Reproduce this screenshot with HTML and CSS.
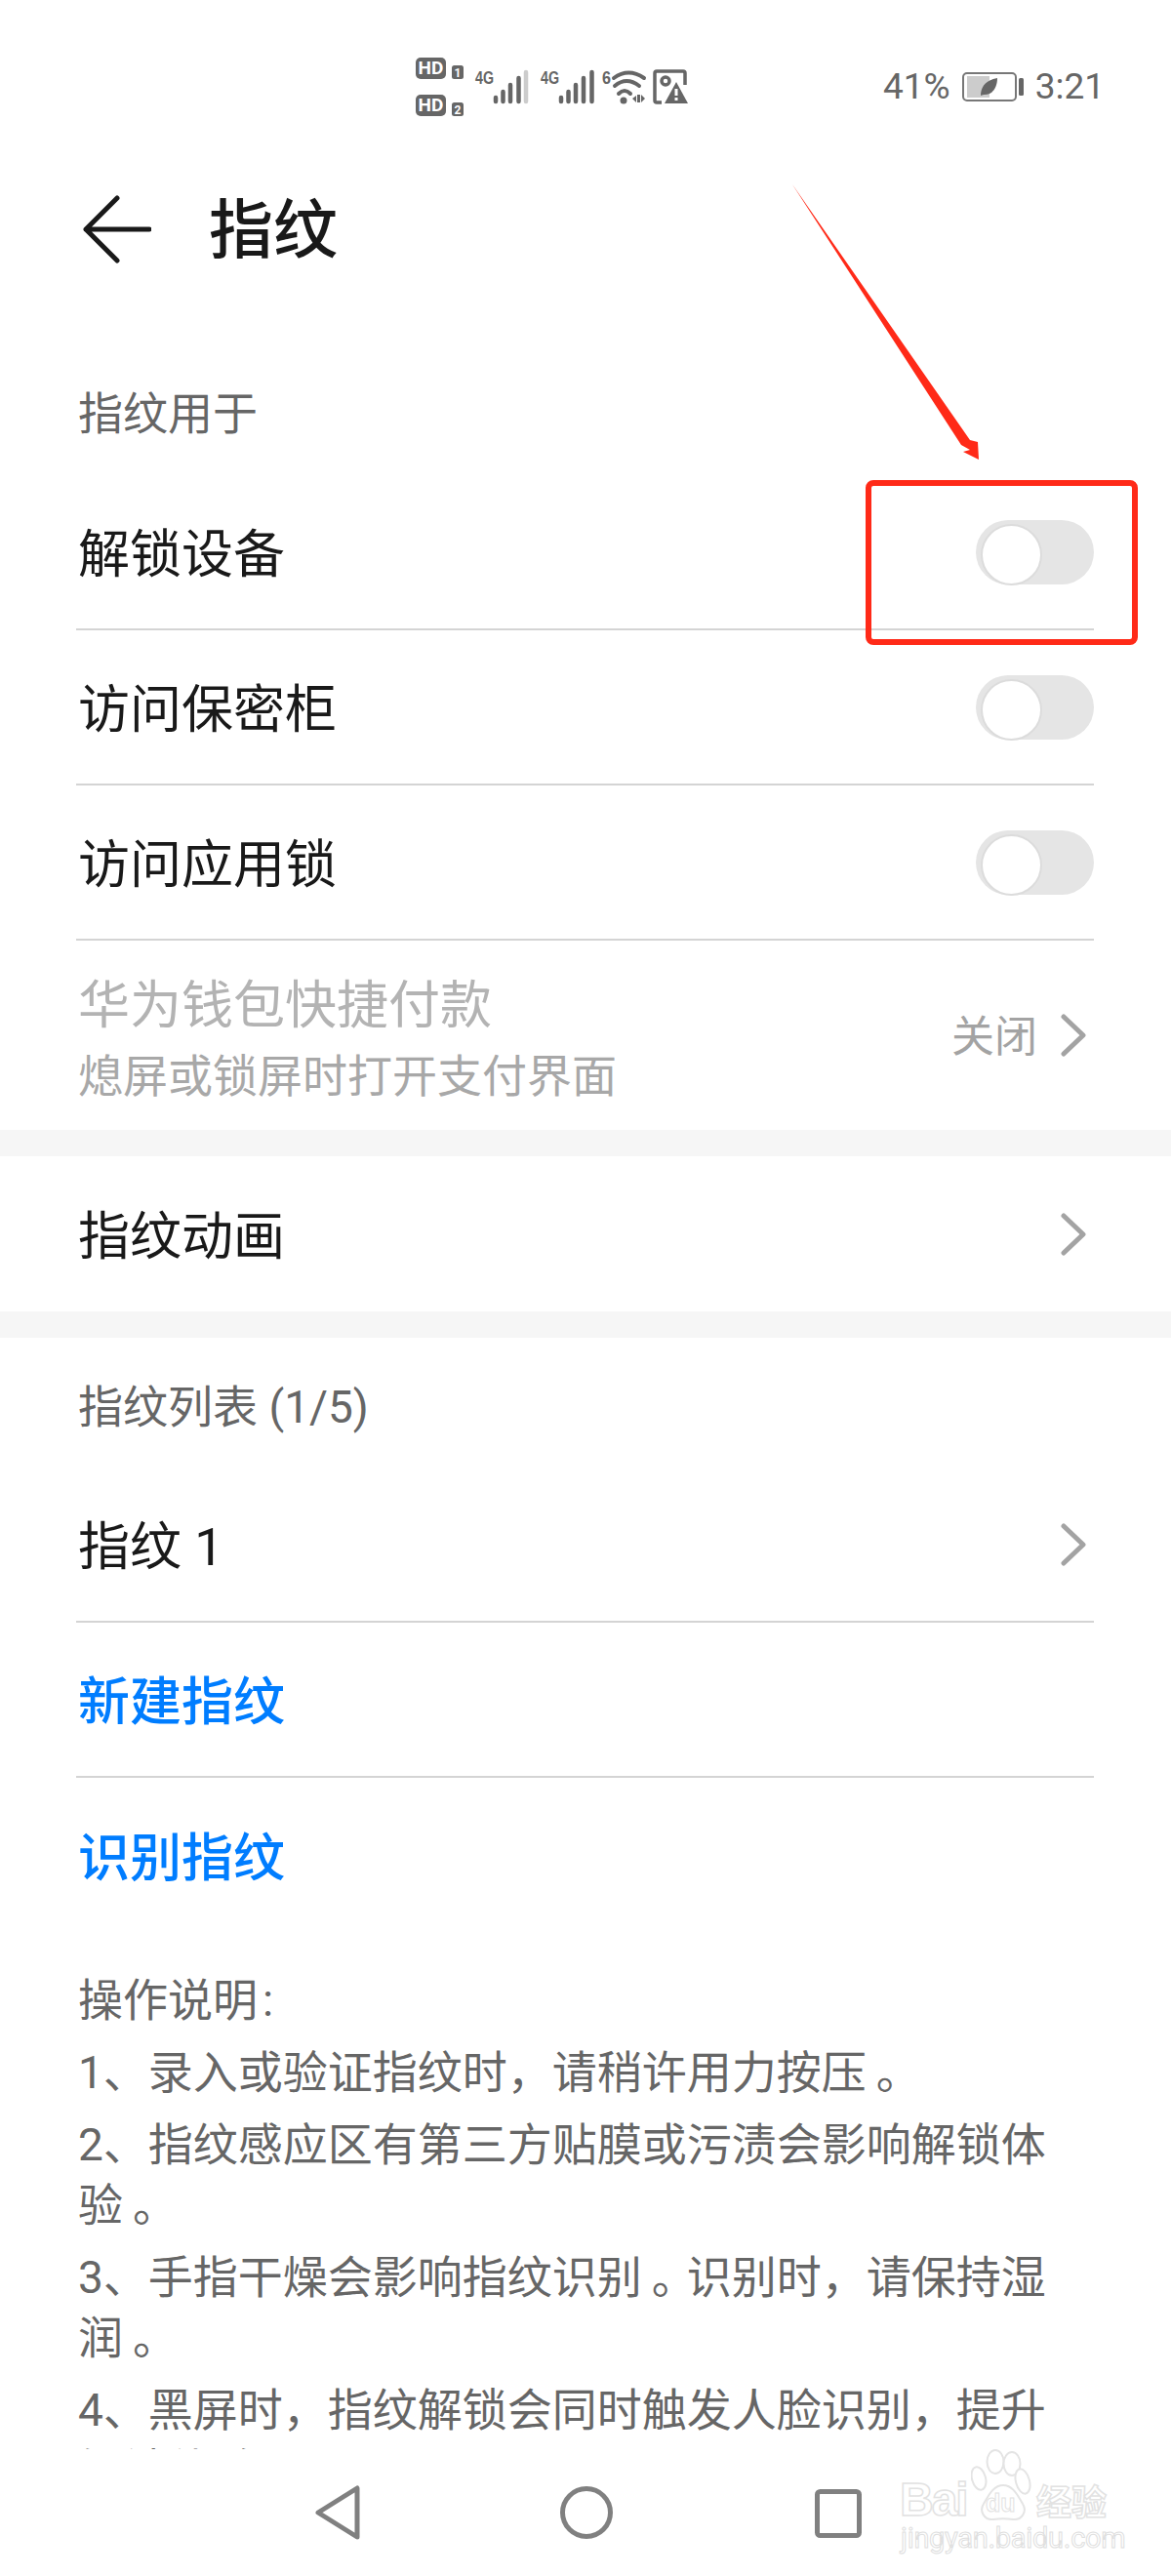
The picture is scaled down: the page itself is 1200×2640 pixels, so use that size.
FILE: index.html
```html
<!DOCTYPE html>
<html lang="zh-CN">
<head>
<meta charset="utf-8">
<title>指纹</title>
<link rel="stylesheet" href="styles.css">
</head>
<body>
<div class="screen">
  <main class="content">
    <header class="status">
      <svg class="status-icons" width="280" height="60" viewBox="0 0 280 60">
        <g class="ic-fill">
          <rect x="0" y="0" width="31" height="22" rx="5"/>
          <rect x="37" y="8" width="12" height="14" rx="2.5"/>
          <rect x="0" y="38" width="31" height="22" rx="5"/>
          <rect x="37" y="46" width="12" height="14" rx="2.5"/>
        </g>
        <text class="ic-hd" x="15.5" y="17">HD</text>
        <text class="ic-hd" x="15.5" y="55">HD</text>
        <text class="ic-sub" x="43" y="20">1</text>
        <text class="ic-sub" x="43" y="58">2</text>
        <text class="ic-net" x="61" y="27" textLength="19" lengthAdjust="spacingAndGlyphs">4G</text>
        <text class="ic-net" x="128" y="27" textLength="19" lengthAdjust="spacingAndGlyphs">4G</text>
        <g class="ic-bar">
          <path d="M82 41v4M89.500 35v10M97 28v17M105.500 21v24"/>
          <path class="ic-bar-dim" d="M113 15v30"/>
          <path d="M149 41v4M156.500 35v10M164 28v17M172 21v24M180.500 15v30"/>
        </g>
        <text class="ic-net" x="191" y="27" textLength="9" lengthAdjust="spacingAndGlyphs">6</text>
        <g class="ic-wifi">
          <path d="M203 21q15-11 31 0"/>
          <path d="M204 29q12-10 25 0"/>
          <path d="M208 37q6-6 12 0"/>
        </g>
        <circle class="ic-fill" cx="213" cy="44" r="3.500"/>
        <path class="ic-fill" d="M222 42l4-3v7zM227 38h3v8h-3zM231 38l4 4-4 4z"/>
        <path class="ic-frame" d="M276 28V16q0-2-2-2h-27q-2 0-2 2v28q0 2 2 2h5"/>
        <circle class="ic-frame" cx="256" cy="24" r="4"/>
        <path class="ic-fill" d="M267 25l12 22h-24z"/>
        <path class="ic-cut" d="M267 32v7M267 41v3"/>
      </svg>
      <div class="status-right">
        <span>41%</span>
        <svg class="battery" width="63" height="30" viewBox="0 0 63 30">
          <rect class="bat-shell" x="1" y="1" width="54" height="28" rx="4"/>
          <rect class="bat-level" x="5" y="4" width="23" height="22"/>
          <path class="ic-fill" d="M19 24c0-9 5-16 17-18 0 10-5 17-13 17-1 0-2 0-4 1z"/>
          <rect class="ic-fill" x="58" y="6" width="5" height="18" rx="1.500"/>
        </svg>
        <span>3:21</span>
      </div>
    </header>

    <div class="appbar">
      <svg class="back" width="70" height="70" viewBox="0 0 70 70">
        <path d="M35 3L3 35l32 32M3 35h65"/>
      </svg>
      <h1 class="title">指纹</h1>
    </div>

    <section class="group">
      <div class="subhead subhead-first">指纹用于</div>
      <div class="row row-line">
        <span class="label">解锁设备</span>
        <span class="switch"></span>
      </div>
      <div class="row row-line">
        <span class="label">访问保密柜</span>
        <span class="switch"></span>
      </div>
      <div class="row row-line">
        <span class="label">访问应用锁</span>
        <span class="switch"></span>
      </div>
      <div class="row row-tall">
        <div class="stack">
          <span class="label label-off">华为钱包快捷付款</span>
          <span class="hint">熄屏或锁屏时打开支付界面</span>
        </div>
        <div class="trail">
          <span class="value">关闭</span>
          <svg class="chev" width="26" height="44" viewBox="0 0 26 44"><path d="M3 3l20 19L3 41"/></svg>
        </div>
      </div>
    </section>

    <section class="group group-band">
      <div class="row">
        <span class="label">指纹动画</span>
        <svg class="chev" width="26" height="44" viewBox="0 0 26 44"><path d="M3 3l20 19L3 41"/></svg>
      </div>
    </section>

    <section class="group group-band">
      <div class="subhead subhead-list">指纹列表 (1/5)</div>
      <div class="row row-line">
        <span class="label">指纹 1</span>
        <svg class="chev" width="26" height="44" viewBox="0 0 26 44"><path d="M3 3l20 19L3 41"/></svg>
      </div>
      <div class="row row-line"><span class="label label-link">新建指纹</span></div>
      <div class="row"><span class="label label-link">识别指纹</span></div>
    </section>

    <section class="notes">
      <p>操作说明<span class="colon">:</span></p>
      <p>1、录入或验证指纹时，请稍许用力按压<span class="stop">。</span></p>
      <p>2、指纹感应区有第三方贴膜或污渍会影响解锁体验<span class="stop">。</span></p>
      <p>3、手指干燥会影响指纹识别<span class="stop">。</span>识别时，请保持湿润<span class="stop">。</span></p>
      <p>4、黑屏时，指纹解锁会同时触发人脸识别，提升解锁体验<span class="stop">。</span></p>
    </section>
  </main>

  <nav class="navbar">
    <svg class="nav-back" width="48" height="56" viewBox="0 0 48 56"><path d="M44 3v50L4 28z"/></svg>
    <svg class="nav-home" width="54" height="54" viewBox="0 0 54 54"><circle cx="27" cy="27" r="24.500"/></svg>
    <svg class="nav-recent" width="48" height="50" viewBox="0 0 48 50"><rect x="2.500" y="2.500" width="43" height="45" rx="3"/></svg>
  </nav>

  <!-- Hand-drawn annotation on the first switch -->
  <svg class="markup" width="1200" height="700" viewBox="0 0 1200 700">
    <path class="markup-arrow" d="M812 189L994 451L1002 453L1003 471L987 463L994 461L985 456z"/>
    <rect class="markup-box" x="890" y="495" width="273" height="163" rx="5"/>
  </svg>

  <!-- Site watermark in the corner -->
  <div class="mark">
    <div class="mark-line">
      <span class="mark-bai">Bai</span>
      <span class="mark-cn">经验</span>
    </div>
    <svg class="mark-paw" width="70" height="76" viewBox="0 0 70 76">
      <ellipse cx="25" cy="13" rx="8.500" ry="12"/>
      <ellipse cx="42" cy="15" rx="8.500" ry="12"/>
      <ellipse cx="8" cy="30" rx="7" ry="12" transform="rotate(-15 8 30)"/>
      <ellipse cx="53" cy="33" rx="7" ry="13" transform="rotate(-15 53 33)"/>
      <path d="M33 37C22 37 17 50 13 56C8 64 14 73 23 72C29 71 37 71 43 72C52 73 58 64 53 56C49 50 44 37 33 37z"/>
    </svg>
    <span class="mark-du">du</span>
    <div class="mark-url">jingyan.baidu.com</div>
  </div>
</div>
</body>
</html>
```

FILE: styles.css
```css
* { box-sizing: border-box; }

html, body {
  margin: 0;
  padding: 0;
  background: #fff;
}

body {
  font-family: Roboto, "Noto Sans CJK SC", sans-serif;
  color: #191919;
}

.screen {
  position: relative;
  width: 1200px;
  height: 2640px;
  overflow: hidden;
  background: #fff;
}

.content {
  height: 2510px;
  overflow: hidden;
}

/* Status bar */
.status {
  height: 150px;
  padding: 59px 68px 0 426px;
  display: flex;
  align-items: flex-start;
  justify-content: space-between;
}

.status-icons { display: block; }

.status-right {
  display: flex;
  align-items: center;
  gap: 12px;
  height: 60px;
  font-size: 37px;
  line-height: 60px;
  color: #666;
}

.status-right svg { display: block; }

.ic-fill { fill: #666; }
.ic-hd {
  font: 700 19px Roboto, sans-serif;
  fill: #fff;
  text-anchor: middle;
}
.ic-sub {
  font: 700 12px Roboto, sans-serif;
  fill: #fff;
  text-anchor: middle;
}
.ic-net {
  font: 700 19px "Liberation Sans", sans-serif;
  fill: #666;
}
.ic-bar path {
  fill: none;
  stroke: #666;
  stroke-width: 4.500;
  stroke-linecap: round;
}
.ic-bar .ic-bar-dim { stroke: #ccc; }
.ic-wifi path {
  fill: none;
  stroke: #666;
  stroke-width: 4;
  stroke-linecap: round;
}
.ic-frame {
  fill: none;
  stroke: #666;
  stroke-width: 3.500;
}
.ic-cut {
  fill: none;
  stroke: #fff;
  stroke-width: 3;
}
.bat-shell {
  fill: #fff;
  stroke: #777;
  stroke-width: 2;
}
.bat-level { fill: #ccc; }

/* App bar */
.appbar {
  height: 170px;
  padding-left: 85px;
  display: flex;
  align-items: center;
  gap: 59px;
}

.back { display: block; }
.back path {
  fill: none;
  stroke: #191919;
  stroke-width: 5;
  stroke-linecap: round;
  stroke-linejoin: round;
}

.title {
  margin: 0;
  font-size: 66px;
  line-height: 76px;
  font-weight: 500;
  position: relative;
  top: 2px;
}

/* Settings list */
.group-band { border-top: 27px solid #f6f6f6; }

.subhead {
  padding: 0 80px;
  font-size: 46px;
  line-height: 60px;
  color: #666;
}
.subhead-first { height: 167px; padding-top: 74px; }
.subhead-list { height: 133px; padding-top: 41px; }

.row {
  position: relative;
  height: 159px;
  margin: 0 79px 0 80px;
  display: flex;
  align-items: center;
  justify-content: space-between;
}

.row-line { border-bottom: 2px solid #d4d4d4; margin-left: 78px; padding-left: 2px; }
.row-tall { height: 194px; }

.label {
  font-size: 53px;
  line-height: 70px;
  padding-top: 6px;
}
.label-off { color: #b3b3b3; }
.label-link { color: #007dff; font-weight: 500; }

.stack { display: flex; flex-direction: column; gap: 7px; }

.hint {
  font-size: 46px;
  line-height: 60px;
  color: #a8a8a8;
}

.trail {
  display: flex;
  align-items: center;
  gap: 24px;
}

.value {
  font-size: 44px;
  line-height: 60px;
  padding-top: 3px;
  color: #a3a3a3;
}

.chev {
  display: block;
  margin-right: 8px;
}
.chev path {
  fill: none;
  stroke: #a3a3a3;
  stroke-width: 5;
  stroke-linecap: round;
  stroke-linejoin: round;
}

.switch {
  position: relative;
  width: 121px;
  height: 66px;
  border-radius: 33px;
  background: #e5e5e5;
}
.switch::after {
  content: "";
  position: absolute;
  left: 5px;
  top: 4px;
  width: 59px;
  height: 59px;
  border-radius: 50%;
  background: #fff;
  border: 2px solid #dcdcdc;
}

/* Usage notes */
.notes {
  padding: 38px 100px 0 80px;
  font-size: 46px;
  line-height: 62px;
  color: #666;
}
.notes p { margin: 0 0 12px; }
.colon { margin-left: 5px; }
.stop { padding-left: 10px; margin-right: -10px; }

/* Navigation bar */
.navbar {
  position: relative;
  height: 130px;
  background: #fff;
}
.navbar svg { position: absolute; display: block; }
.navbar path, .navbar circle, .navbar rect {
  fill: none;
  stroke: #808080;
  stroke-width: 5;
  stroke-linejoin: round;
}
.nav-back { left: 322px; top: 37px; }
.nav-home { left: 574px; top: 38px; }
.nav-recent { left: 835px; top: 41px; }

/* Annotation */
.markup {
  position: absolute;
  left: 0;
  top: 0;
  pointer-events: none;
}
.markup-arrow { fill: #ff2a18; }
.markup-box {
  fill: none;
  stroke: #ff2a18;
  stroke-width: 6;
}

/* Watermark */
.mark {
  position: absolute;
  left: 922px;
  top: 2510px;
  width: 220px;
  height: 104px;
}
.mark-line {
  position: absolute;
  left: 0;
  top: 24px;
  width: 220px;
  display: flex;
  justify-content: space-between;
  align-items: center;
  color: #fff;
  -webkit-text-stroke: 1.500px #e2e2e2;
}
.mark-bai {
  font: 700 48px/56px "Liberation Sans", sans-serif;
  letter-spacing: -2px;
}
.mark-cn {
  font: 700 36px/56px "Noto Sans CJK SC", sans-serif;
  white-space: nowrap;
  margin-right: 8px;
}
.mark-paw {
  position: absolute;
  left: 73px;
  top: 0;
  fill: #fff;
  stroke: #e4e4e4;
  stroke-width: 2;
}
.mark-du {
  position: absolute;
  left: 88px;
  top: 40px;
  font: 700 25px/30px "Liberation Sans", sans-serif;
  color: #fff;
  -webkit-text-stroke: 1px #e2e2e2;
}
.mark-url {
  position: absolute;
  left: 1px;
  top: 76px;
  width: 220px;
  font: 400 29px/30px Roboto, sans-serif;
  letter-spacing: -0.300px;
  color: #fff;
  -webkit-text-stroke: 1px #dedede;
  white-space: nowrap;
}
```
